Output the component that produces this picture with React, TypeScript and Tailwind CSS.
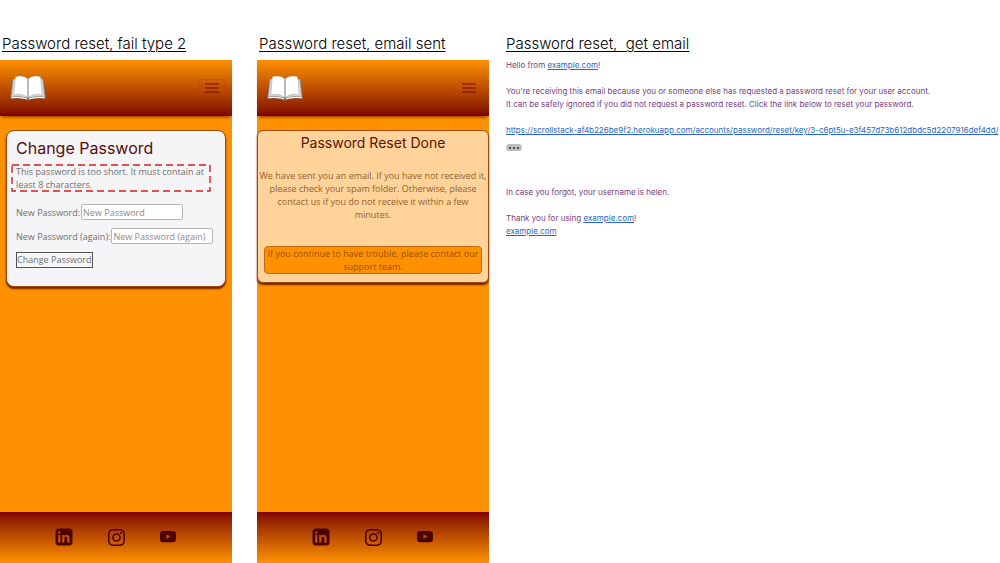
import type { ReactNode } from "react";
import { BsInstagram, BsYoutube } from "react-icons/bs";

function ColumnTitle({ children }: { children: ReactNode }) {
  return (
    <h2 className="mt-8 whitespace-pre font-['Inter',sans-serif] text-[15px] leading-6 font-light text-black underline decoration-1 underline-offset-2">
      {children}
    </h2>
  );
}

function BookLogo() {
  return (
    <svg viewBox="0 0 36 26" className="h-[26px] w-9" aria-hidden="true">
      <path d="M2.2 4.5 L0.3 23.8 Q10 22.4 16.2 24 L17 25.5 H19 L19.8 24 Q26 22.4 35.7 23.8 L33.8 4.5 Z" fill="#77706d" />
      <path d="M3 4 L1 22 Q11 20.6 17 23 H19 Q25 20.6 35 22 L33 4 Z" fill="#d4d4d4" stroke="#77706d" strokeWidth="0.4" />
      <path d="M0.9 22.8 Q11 21.6 17 24 M35.1 22.8 Q25 21.6 19 24" fill="none" stroke="#f8f8f8" strokeWidth="1.1" />
      <path d="M5.4 1.8 Q13 -0.6 18 4 V22.6 Q12 17.8 3.8 19.8 Z" fill="#fff" stroke="#999" strokeWidth="0.4" />
      <path d="M30.6 1.8 Q23 -0.6 18 4 V22.6 Q24 17.8 32.2 19.8 Z" fill="#fff" stroke="#999" strokeWidth="0.4" />
      <path d="M18 4 V23" stroke="#8b8b8b" strokeWidth="0.9" />
    </svg>
  );
}

function LinkedInIcon() {
  return (
    <svg viewBox="0 0 18 18" className="size-[18px]" aria-hidden="true">
      <path
        fill="currentColor"
        fillRule="evenodd"
        d="M4 0.5H14A3.5 3.5 0 0 1 17.5 4V14A3.5 3.5 0 0 1 14 17.5H4A3.5 3.5 0 0 1 0.5 14V4A3.5 3.5 0 0 1 4 0.5Z M3.2 7V14.4H5.4V7Z M4.3 3.3A1.3 1.3 0 1 0 4.3 5.9A1.3 1.3 0 1 0 4.3 3.3Z M7.2 7V14.4H9.4V10.6C9.4 9.4 10 8.8 10.9 8.8C11.9 8.8 12.3 9.5 12.3 10.6V14.4H14.6V10.1C14.6 7.9 13.4 6.8 11.8 6.8C10.6 6.8 9.8 7.3 9.3 8V7Z"
      />
    </svg>
  );
}

function Phone({ framed, children }: { framed?: boolean; children: ReactNode }) {
  return (
    <div className="mt-1 flex grow flex-col bg-[#ff9100] font-['Open_Sans',sans-serif]">
      <header className="flex h-14 items-center justify-between bg-linear-to-b from-[#ff9100] to-[#800000] pr-1.5 pl-2.5 shadow-[0_3px_3px_-2px_rgba(90,30,0,0.8)]">
        <a href="#home" aria-label="Home">
          <BookLogo />
        </a>
        <button
          type="button"
          aria-label="Toggle navigation"
          className={
            framed
              ? "flex h-[18px] w-7 items-center justify-center rounded-sm border border-[#b04000]/40"
              : "flex h-[18px] w-7 items-center justify-center rounded-sm border border-transparent"
          }
        >
          <svg viewBox="0 0 14 10" className="h-2.5 w-3.5" aria-hidden="true">
            <path d="M0 1H14M0 5H14M0 9H14" stroke="#800000" strokeWidth="1.2" />
          </svg>
        </button>
      </header>
      <main className="grow pt-3.5">{children}</main>
      <footer className="flex h-[51px] items-center justify-center gap-[35px] bg-linear-to-b from-[#800000] to-[#ff9100] pr-0.5 pb-px text-[#4a0000]">
        <a href="#linkedin" aria-label="LinkedIn">
          <LinkedInIcon />
        </a>
        <a href="#instagram" aria-label="Instagram">
          <BsInstagram className="size-[17px]" />
        </a>
        <a href="#youtube" aria-label="YouTube">
          <BsYoutube className="size-4" />
        </a>
      </footer>
    </div>
  );
}

const inputClass =
  "h-4 w-[102px] rounded-xs border border-[#b5b5b5] bg-white px-px text-[9px] text-[#555] placeholder:text-[#8c8c8c]";

function ChangePassword() {
  return (
    <section className="mx-1.5 rounded-lg border border-[#a04a10] bg-[#f5f5f7] px-[5px] pt-[5px] pb-[18px] text-[9px] leading-[13px] text-[#707070] shadow-[0_2px_2px_#6b2000]">
      <h1 className="px-1 font-['Inter',sans-serif] text-[16px] leading-6 text-[#5a0a0a]">Change Password</h1>
      <p className="relative mt-[5px] mr-2.5 px-1">
        This password is too short. It must contain at least 8 characters.
        <svg className="absolute inset-0 size-full overflow-visible" aria-hidden="true">
          <rect width="100%" height="100%" fill="none" stroke="#d81e1e" strokeWidth="1.4" strokeDasharray="7 4" />
        </svg>
      </p>
      <form className="px-1">
        <div className="mt-[13px] flex items-center gap-px">
          <label htmlFor="password1">New Password:</label>
          <input id="password1" type="password" placeholder="New Password" className={inputClass} />
        </div>
        <div className="mt-2 flex items-center gap-px">
          <label htmlFor="password2">New Password (again):</label>
          <input id="password2" type="password" placeholder="New Password (again)" className={inputClass} />
        </div>
        <button type="button" className="mt-2 h-4 border border-[#555] leading-3">
          Change Password
        </button>
      </form>
    </section>
  );
}

function ResetDone() {
  return (
    <section className="rounded-md border border-[#a04a10] bg-[#ffd399] pb-2 text-center text-[9px] leading-[13px] text-[#91632f] shadow-[0_2px_2px_#6b2000]">
      <h1 className="font-['Inter',sans-serif] text-[14px] leading-6 text-[#5a1408]">Password Reset Done</h1>
      <p className="mt-3.5">
        We have sent you an email. If you have not received it, please check your spam folder. Otherwise, please contact
        us if you do not receive it within a few minutes.
      </p>
      <p className="mx-1.5 mt-[25px] rounded-sm border border-[#c06a10] bg-[#ff9100] text-[#9c5000]">
        If you continue to have trouble, please contact our support team.
      </p>
    </section>
  );
}

function ExampleLink() {
  return (
    <a href="#example" className="text-[#2a66c8] underline">
      example.com
    </a>
  );
}

export default function App() {
  return (
    <div className="grid min-h-screen grid-cols-[257fr_249fr_494fr] bg-white">
      <div className="flex min-w-0 flex-col pr-[25px]">
        <div className="pl-0.5">
          <ColumnTitle>Password reset, fail type 2</ColumnTitle>
        </div>
        <Phone framed>
          <ChangePassword />
        </Phone>
      </div>
      <div className="flex min-w-0 flex-col pr-[17px]">
        <div className="pl-0.5">
          <ColumnTitle>Password reset, email sent</ColumnTitle>
        </div>
        <Phone>
          <ResetDone />
        </Phone>
      </div>
      <div className="min-w-0">
        <ColumnTitle>{"Password reset,  get email"}</ColumnTitle>
        <article className="mt-[3px] font-['Inter',Arial,sans-serif] text-[8px] leading-[13px] text-[#7a4080]">
          <p>
            Hello from <ExampleLink />!
          </p>
          <p className="mt-[13px]">
            You're receiving this email because you or someone else has requested a password reset for your user
            account.
            <br />
            It can be safely ignored if you did not request a password reset. Click the link below to reset your
            password.
          </p>
          <p className="mt-[13px] wrap-anywhere">
            <a href="#reset" className="text-[#2a66c8] underline">
              https://scrollstack-af4b226be9f2.herokuapp.com/accounts/password/reset/key/3-c6pt5u-e3f457d73b612dbdc5d2207916def4dd/
            </a>
          </p>
          <button
            type="button"
            aria-label="Show trimmed content"
            className="mt-[7px] flex h-[7px] w-4 items-center justify-center gap-0.5 rounded-full bg-[#bdbdbd]"
          >
            <span className="size-0.5 rounded-full bg-[#333]" />
            <span className="size-0.5 rounded-full bg-[#333]" />
            <span className="size-0.5 rounded-full bg-[#333]" />
          </button>
          <p className="mt-[35px]">In case you forgot, your username is helen.</p>
          <p className="mt-[13px]">
            Thank you for using <ExampleLink />!
            <br />
            <ExampleLink />
          </p>
        </article>
      </div>
    </div>
  );
}
